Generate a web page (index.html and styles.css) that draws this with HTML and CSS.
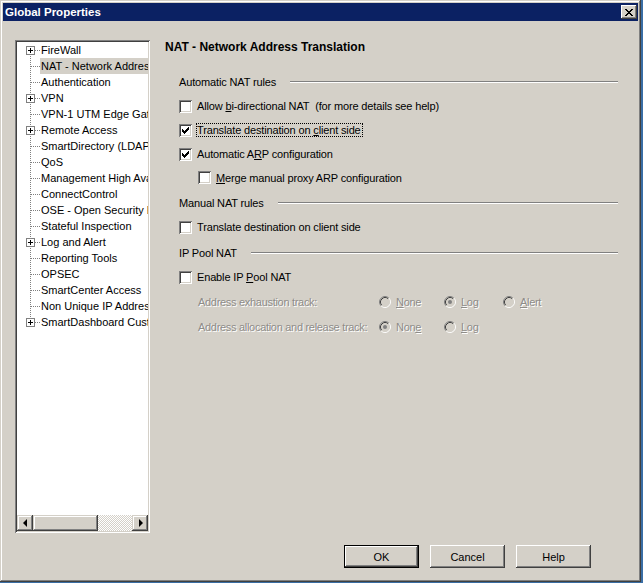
FILE: index.html
```html
<!DOCTYPE html>
<html lang="en">

<head>
  <meta charset="UTF-8" />
  <title>Global Properties</title>
  <link rel="stylesheet" href="styles.css">
</head>

<body>
  <div class="window">
    <div class="titlebar">
      <span class="title">Global Properties</span>
      <button class="close" aria-label="Close">
        <svg width="8" height="7" viewBox="0 0 8 7">
          <path d="M0 0h2v1h-2zM6 0h2v1h-2zM1 1h2v1h-2zM5 1h2v1h-2zM2 2h4v1h-4zM3 3h2v1h-2zM2 4h4v1h-4zM1 5h2v1h-2zM5 5h2v1h-2zM0 6h2v1h-2zM6 6h2v1h-2z" />
        </svg>
      </button>
    </div>

    <div class="main">
      <div class="tree">
        <ul class="nodes">
          <li class="node first"><span class="twig"><span class="plus"></span></span><span class="label">FireWall</span></li>
          <li class="node"><span class="twig"></span><span class="label selected">NAT - Network Address Translation</span></li>
          <li class="node"><span class="twig"></span><span class="label">Authentication</span></li>
          <li class="node"><span class="twig"><span class="plus"></span></span><span class="label">VPN</span></li>
          <li class="node"><span class="twig"></span><span class="label">VPN-1 UTM Edge Gateway</span></li>
          <li class="node"><span class="twig"><span class="plus"></span></span><span class="label">Remote Access</span></li>
          <li class="node"><span class="twig"></span><span class="label">SmartDirectory (LDAP)</span></li>
          <li class="node"><span class="twig"></span><span class="label">QoS</span></li>
          <li class="node"><span class="twig"></span><span class="label">Management High Availability</span></li>
          <li class="node"><span class="twig"></span><span class="label">ConnectControl</span></li>
          <li class="node"><span class="twig"></span><span class="label">OSE - Open Security Extension</span></li>
          <li class="node"><span class="twig"></span><span class="label">Stateful Inspection</span></li>
          <li class="node"><span class="twig"><span class="plus"></span></span><span class="label">Log and Alert</span></li>
          <li class="node"><span class="twig"></span><span class="label">Reporting Tools</span></li>
          <li class="node"><span class="twig"></span><span class="label">OPSEC</span></li>
          <li class="node"><span class="twig"></span><span class="label">SmartCenter Access</span></li>
          <li class="node"><span class="twig"></span><span class="label">Non Unique IP Address Ranges</span></li>
          <li class="node last"><span class="twig"><span class="plus"></span></span><span class="label">SmartDashboard Customization</span></li>
        </ul>
        <div class="hscroll">
          <span class="sbtn"><span class="arrow-left"></span></span>
          <span class="thumb"></span>
          <span class="track"></span>
          <span class="sbtn"><span class="arrow-right"></span></span>
        </div>
      </div>

      <div class="page">
        <h1 class="heading">NAT - Network Address Translation</h1>

        <div class="sec"><span>Automatic NAT rules</span><span class="rule"></span></div>
        <div class="row">
          <span class="chk"></span>
          <span class="text">Allow <u>b</u>i-directional NAT&nbsp; (for more details see help)</span>
        </div>
        <div class="row">
          <span class="chk"><svg width="13" height="13" viewBox="0 0 13 13"><path d="M9 3h1v1h-1zM8 4h2v1h-2zM3 5h1v1h-1zM7 5h3v1h-3zM3 6h2v1h-2zM6 6h3v1h-3zM3 7h5v1h-5zM4 8h3v1h-3zM5 9h1v1h-1z" /></svg></span>
          <span class="text focus">Translate destination on <u>c</u>lient side</span>
        </div>
        <div class="row">
          <span class="chk"><svg width="13" height="13" viewBox="0 0 13 13"><path d="M9 3h1v1h-1zM8 4h2v1h-2zM3 5h1v1h-1zM7 5h3v1h-3zM3 6h2v1h-2zM6 6h3v1h-3zM3 7h5v1h-5zM4 8h3v1h-3zM5 9h1v1h-1z" /></svg></span>
          <span class="text">Automatic A<u>R</u>P configuration</span>
        </div>
        <div class="row sub">
          <span class="chk"></span>
          <span class="text"><u>M</u>erge manual proxy ARP configuration</span>
        </div>

        <div class="sec"><span>Manual NAT rules</span><span class="rule"></span></div>
        <div class="row">
          <span class="chk"></span>
          <span class="text">Translate destination on client side</span>
        </div>

        <div class="sec"><span>IP Pool NAT</span><span class="rule"></span></div>
        <div class="row">
          <span class="chk"></span>
          <span class="text">Enable IP <u>P</u>ool NAT</span>
        </div>
        <div class="track-row">
          <span class="off">Address exhaustion track:</span>
          <span class="opt">
            <svg class="radio" width="12" height="12" viewBox="0 0 12 12"><circle class="fill" cx="6" cy="6" r="5" /><path class="o1" d="M2.11 9.89A5.5 5.5 0 0 1 9.89 2.11" /><path class="o2" d="M9.89 2.11A5.5 5.5 0 0 1 2.11 9.89" /><path class="i1" d="M2.82 9.18A4.5 4.5 0 0 1 9.18 2.82" /><path class="i2" d="M9.18 2.82A4.5 4.5 0 0 1 2.82 9.18" /></svg>
            <span class="off"><u>N</u>one</span>
          </span>
          <span class="opt">
            <svg class="radio" width="12" height="12" viewBox="0 0 12 12"><circle class="fill" cx="6" cy="6" r="5" /><path class="o1" d="M2.11 9.89A5.5 5.5 0 0 1 9.89 2.11" /><path class="o2" d="M9.89 2.11A5.5 5.5 0 0 1 2.11 9.89" /><path class="i1" d="M2.82 9.18A4.5 4.5 0 0 1 9.18 2.82" /><path class="i2" d="M9.18 2.82A4.5 4.5 0 0 1 2.82 9.18" /><circle class="dot" cx="6" cy="6" r="2" /></svg>
            <span class="off"><u>L</u>og</span>
          </span>
          <span class="opt">
            <svg class="radio" width="12" height="12" viewBox="0 0 12 12"><circle class="fill" cx="6" cy="6" r="5" /><path class="o1" d="M2.11 9.89A5.5 5.5 0 0 1 9.89 2.11" /><path class="o2" d="M9.89 2.11A5.5 5.5 0 0 1 2.11 9.89" /><path class="i1" d="M2.82 9.18A4.5 4.5 0 0 1 9.18 2.82" /><path class="i2" d="M9.18 2.82A4.5 4.5 0 0 1 2.82 9.18" /></svg>
            <span class="off"><u>A</u>lert</span>
          </span>
        </div>
        <div class="track-row">
          <span class="off">Address allocation and release track:</span>
          <span class="opt">
            <svg class="radio" width="12" height="12" viewBox="0 0 12 12"><circle class="fill" cx="6" cy="6" r="5" /><path class="o1" d="M2.11 9.89A5.5 5.5 0 0 1 9.89 2.11" /><path class="o2" d="M9.89 2.11A5.5 5.5 0 0 1 2.11 9.89" /><path class="i1" d="M2.82 9.18A4.5 4.5 0 0 1 9.18 2.82" /><path class="i2" d="M9.18 2.82A4.5 4.5 0 0 1 2.82 9.18" /><circle class="dot" cx="6" cy="6" r="2" /></svg>
            <span class="off">Non<u>e</u></span>
          </span>
          <span class="opt">
            <svg class="radio" width="12" height="12" viewBox="0 0 12 12"><circle class="fill" cx="6" cy="6" r="5" /><path class="o1" d="M2.11 9.89A5.5 5.5 0 0 1 9.89 2.11" /><path class="o2" d="M9.89 2.11A5.5 5.5 0 0 1 2.11 9.89" /><path class="i1" d="M2.82 9.18A4.5 4.5 0 0 1 9.18 2.82" /><path class="i2" d="M9.18 2.82A4.5 4.5 0 0 1 2.82 9.18" /></svg>
            <span class="off"><u>L</u>og</span>
          </span>
        </div>
      </div>
    </div>

    <div class="buttons">
      <button class="btn default">OK</button>
      <button class="btn">Cancel</button>
      <button class="btn">Help</button>
    </div>
  </div>
</body>

</html>
```

FILE: styles.css
```css
:root {
  --face: #d4d0c8;
  --shadow: #808080;
  --dark: #404040;
  --light: #ffffff;
  --title: #0b2163;
  --disabled: #8e8c88;
}

body {
  margin: 0;
  background: #3a6ea5;
  font-family: "Liberation Sans", Arial, sans-serif;
  font-size: 11px;
  color: #000;
}

.window {
  width: 641px;
  height: 582px;
  box-sizing: border-box;
  padding: 3px;
  background: var(--face);
  display: flex;
  flex-direction: column;
  box-shadow: inset -1px -1px var(--dark), inset 1px 1px var(--face),
    inset -2px -2px var(--shadow), inset 2px 2px var(--light);
}

.titlebar {
  height: 18px;
  flex: none;
  background: var(--title);
  display: flex;
  align-items: center;
  justify-content: space-between;
  padding: 0 1px 0 2px;
}

.title {
  color: #fff;
  font-weight: bold;
  font-size: 11.5px;
}

.close {
  width: 16px;
  height: 14px;
  padding: 0;
  border: 0;
  background: var(--face);
  display: flex;
  align-items: center;
  justify-content: center;
  box-shadow: inset -1px -1px var(--dark), inset 1px 1px var(--light),
    inset -2px -2px var(--shadow), inset 2px 2px var(--face);
}

.main {
  flex: 1;
  display: flex;
  padding: 19px 0 0 12px;
}

/* tree */

.tree {
  width: 135px;
  height: 493px;
  box-sizing: border-box;
  padding: 2px;
  background: #fff;
  display: flex;
  flex-direction: column;
  box-shadow: inset 1px 1px var(--shadow), inset -1px -1px var(--light),
    inset 2px 2px var(--dark), inset -2px -2px var(--face);
}

.nodes {
  list-style: none;
  margin: 0;
  padding: 0;
  height: 473px;
  overflow: hidden;
}

.node {
  display: flex;
  height: 16px;
  line-height: 16px;
  white-space: nowrap;
}

.twig {
  --vy: 0;
  --vh: 16px;
  flex: none;
  width: 23px;
  height: 16px;
  background:
    repeating-linear-gradient(to right, var(--shadow) 0 1px, transparent 1px 2px) 14px 8px / 9px 1px no-repeat,
    repeating-linear-gradient(to bottom, var(--shadow) 0 1px, transparent 1px 2px) 13px var(--vy) / 1px var(--vh) no-repeat;
}

.first .twig {
  --vy: 8px;
  --vh: 8px;
}

.last .twig {
  --vh: 9px;
}

.plus {
  display: block;
  width: 9px;
  height: 9px;
  box-sizing: border-box;
  margin: 4px 0 0 9px;
  border: 1px solid var(--shadow);
  background:
    linear-gradient(#000, #000) 1px 3px / 5px 1px no-repeat,
    linear-gradient(#000, #000) 3px 1px / 1px 5px no-repeat,
    #fff;
}

.label {
  padding: 0 2px 0 1px;
}

.selected {
  background: var(--face);
}

.hscroll {
  display: flex;
  height: 16px;
  flex: none;
}

.sbtn,
.thumb {
  background: var(--face);
  box-shadow: inset -1px -1px var(--dark), inset 1px 1px var(--face),
    inset -2px -2px var(--shadow), inset 2px 2px var(--light);
}

.sbtn {
  width: 16px;
  display: flex;
  align-items: center;
  justify-content: center;
}

.thumb {
  width: 65px;
}

.track {
  flex: 1;
  background: repeating-conic-gradient(#fff 0 25%, var(--face) 0 50%) 0 0 / 2px 2px;
}

.arrow-left,
.arrow-right {
  width: 0;
  height: 0;
  border-top: 4px solid transparent;
  border-bottom: 4px solid transparent;
}

.arrow-left {
  border-right: 4px solid #000;
  margin-right: 1px;
}

.arrow-right {
  border-left: 4px solid #000;
  margin-left: 1px;
}

/* page */

.page {
  width: 453px;
  margin-left: 15px;
  display: flex;
  flex-direction: column;
  letter-spacing: -0.15px;
}

.heading {
  margin: 0;
  height: 14px;
  line-height: 14px;
  font-size: 12px;
  font-weight: bold;
  letter-spacing: 0;
}

.sec {
  display: flex;
  align-items: center;
  height: 16px;
  margin: 6px 0 0 14px;
}

.heading + .sec {
  margin-top: 20px;
}

.rule {
  flex: 1;
  margin-left: 14px;
  border-top: 1px solid var(--shadow);
  border-bottom: 1px solid var(--light);
}

.row {
  display: flex;
  align-items: center;
  height: 24px;
  padding-left: 14px;
}

.sec + .row {
  margin-top: 4px;
}

.row.sub {
  height: 23px;
  padding-left: 33px;
}

.chk {
  flex: none;
  width: 13px;
  height: 13px;
  box-sizing: border-box;
  background: #fff;
  box-shadow: inset 1px 1px var(--shadow), inset -1px -1px var(--light),
    inset 2px 2px var(--dark), inset -2px -2px var(--face);
}

.chk svg {
  display: block;
}

.text {
  margin-left: 5px;
  white-space: nowrap;
}

.focus {
  margin-left: 4px;
  padding-right: 1px;
  border: 1px dotted #000;
  line-height: 12px;
}

.track-row {
  display: grid;
  grid-template-columns: 181px 65px 59px auto;
  align-items: center;
  height: 24px;
  margin-top: 1px;
  padding-left: 33px;
  white-space: nowrap;
  letter-spacing: -0.3px;
}

.off {
  color: var(--disabled);
  text-shadow: 1px 1px 0 #fff;
}

.opt {
  display: flex;
  align-items: center;
  gap: 5px;
}

.radio .fill {
  fill: var(--face);
}

.radio path {
  fill: none;
}

.radio .o1 {
  stroke: var(--shadow);
}

.radio .o2 {
  stroke: var(--light);
}

.radio .i1 {
  stroke: var(--dark);
}

.radio .i2 {
  stroke: var(--face);
}

.radio .dot {
  fill: var(--shadow);
}

/* buttons */

.buttons {
  flex: none;
  display: flex;
  justify-content: flex-end;
  gap: 11px;
  padding: 0 47px 11px 0;
}

.btn {
  width: 75px;
  height: 23px;
  padding: 0;
  border: 0;
  background: var(--face);
  font-family: "Liberation Sans", Arial, sans-serif;
  font-size: 11px;
  color: #000;
  box-shadow: inset -1px -1px var(--dark), inset 1px 1px var(--light),
    inset -2px -2px var(--shadow), inset 2px 2px var(--face);
}

.btn.default {
  box-shadow: inset 0 0 0 1px #000, inset -2px -2px var(--dark), inset 2px 2px var(--light),
    inset -3px -3px var(--shadow);
}
```
